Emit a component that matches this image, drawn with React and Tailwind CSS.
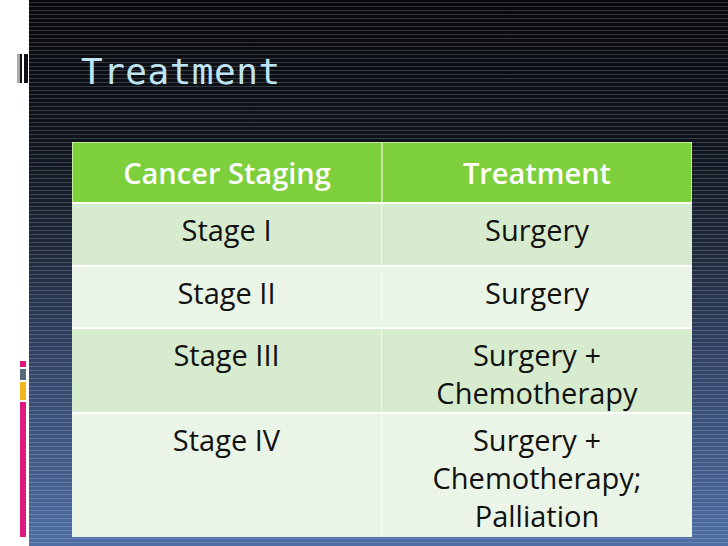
export default function App() {
  const rows = [
    { h: "h-[63px]", bg: "bg-[#d7ebcf]", a: ["Stage I"], b: ["Surgery"] },
    { h: "h-[62px]", bg: "bg-[#ebf5e7]", a: ["Stage II"], b: ["Surgery"] },
    { h: "h-[85px]", bg: "bg-[#d7ebcf]", a: ["Stage III"], b: ["Surgery +", "Chemotherapy"] },
    { h: "h-[125px]", bg: "bg-[#ebf5e7]", a: ["Stage IV"], b: ["Surgery +", "Chemotherapy;", "Palliation"] },
  ];
  return (
    <div className="flex w-[728px] h-[546px] overflow-hidden bg-white">
      <div className="w-[29px] h-full flex flex-col relative">
        <div className="flex h-[29px] mt-[54px] ml-[17px]">
          <div className="w-[3px] bg-[#a9a9a9]" />
          <div className="w-[2px] bg-[#111]" />
          <div className="w-[2px] bg-white" />
          <div className="w-[4px] bg-[#111]" />
        </div>
        <div className="flex flex-col ml-[20px] w-[6px] mt-[278px] gap-[2px]">
          <div className="h-[6px] bg-[#e0197c]" />
          <div className="h-[11px] bg-[#58697e]" />
          <div className="h-[18px] bg-[#f5b51d]" />
          <div className="h-[135px] bg-[#e0197c]" />
        </div>
      </div>
      <div className="flex-1 h-full bg-[linear-gradient(180deg,#07080b_0%,#0f131a_25%,#1e2838_45%,#34466a_68%,#4f6ea3_100%)]">
        <div className="w-full h-full bg-[repeating-linear-gradient(180deg,rgba(255,255,255,0)_0px,rgba(255,255,255,0)_2px,rgba(200,215,240,0.22)_2px,rgba(200,215,240,0.22)_3px,rgba(255,255,255,0)_3px,rgba(255,255,255,0)_4px)] flex flex-col">
          <div className="pl-[52px] pt-[48px] h-[142px] text-[36px] leading-[48px] text-[#bfe5f4] font-['DejaVu_Sans_Mono',monospace] tracking-[0.5px]">
            Treatment
          </div>
          <div className="ml-[43px] w-[620px] flex flex-col font-['Open_Sans',sans-serif] text-[29px] text-[#111] [font-variant-ligatures:none]">
            <div className="flex h-[60px] bg-[#7dcf3b] border-t border-l border-r border-[#c8ec9a] font-semibold text-white">
              <div className="w-[310px] flex items-center justify-center border-r-2 border-[#c2e89a]">Cancer Staging</div>
              <div className="flex-1 flex items-center justify-center">Treatment</div>
            </div>
            {rows.map((r, i) => (
              <div key={i} className={`flex ${r.h} ${r.bg} border-t-2 border-white`}>
                <div className="w-[310px] flex flex-col items-center pt-[7px] leading-[38px] border-r border-[#f4faf1]">
                  {r.a.map((t) => <div key={t}>{t}</div>)}
                </div>
                <div className="flex-1 flex flex-col items-center pt-[7px] leading-[38px]">
                  {r.b.map((t) => <div key={t}>{t}</div>)}
                </div>
              </div>
            ))}
          </div>
        </div>
      </div>
    </div>
  );
}
